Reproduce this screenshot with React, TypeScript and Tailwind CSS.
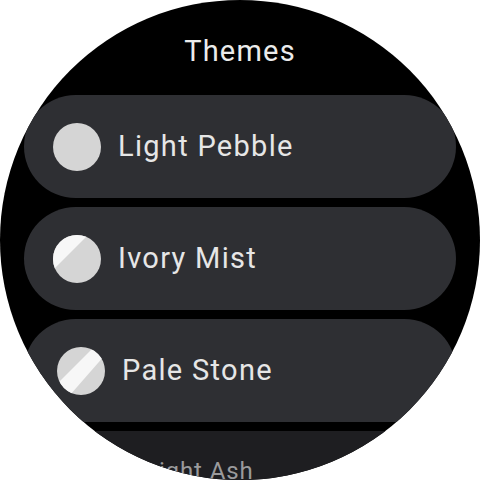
import React from "react";

type Swatch = "solid" | "corner" | "band";

const themes: { name: string; swatch: Swatch }[] = [
  { name: "Light Pebble", swatch: "solid" },
  { name: "Ivory Mist", swatch: "corner" },
  { name: "Pale Stone", swatch: "band" },
];

function SwatchIcon({ kind }: { kind: Swatch }) {
  return (
    <svg viewBox="0 0 48 48" className="w-12 h-12 shrink-0">
      <defs>
        <clipPath id={`c-${kind}`}>
          <circle cx="24" cy="24" r="24" />
        </clipPath>
      </defs>
      <g clipPath={`url(#c-${kind})`}>
        <rect width="48" height="48" fill="#d5d5d5" />
        {kind === "corner" && <polygon points="0,0 35,0 0,35" fill="#f7f7f7" />}
        {kind === "band" && <polygon points="37,0 48,8 13,48 0,37" fill="#f7f7f7" />}
      </g>
    </svg>
  );
}

export default function App() {
  return (
    <div className="w-[480px] h-[480px] bg-black overflow-hidden font-['Roboto',sans-serif] [clip-path:circle(240px_at_240px_240px)]">
      <div className="h-[95px] flex items-center justify-center pt-[8px]">
        <h1 className="text-[29px] tracking-[1.2px] text-[#ebebeb]">Themes</h1>
      </div>

      <div className="flex flex-col gap-[9px] px-[24px]">
        {themes.map((t, i) => (
          <div
            key={t.name}
            className={
              "h-[103px] rounded-full bg-[#2e2f33] flex items-center gap-[17px] " +
              (i === 2 ? "pl-[33px]" : "pl-[29px]")
            }
          >
            <SwatchIcon kind={t.swatch} />
            <span className="text-[29px] tracking-[1.3px] text-[#e6e6e6]">{t.name}</span>
          </div>
        ))}

        {/* partly visible next row */}
        <div className="h-[103px] rounded-[48px] bg-[#1e1e21] flex items-start pl-[110px] pt-[22px]">
          <span className="text-[24px] tracking-[0.9px] text-[#9a9a9c]">Bright Ash</span>
        </div>
      </div>
    </div>
  );
}
